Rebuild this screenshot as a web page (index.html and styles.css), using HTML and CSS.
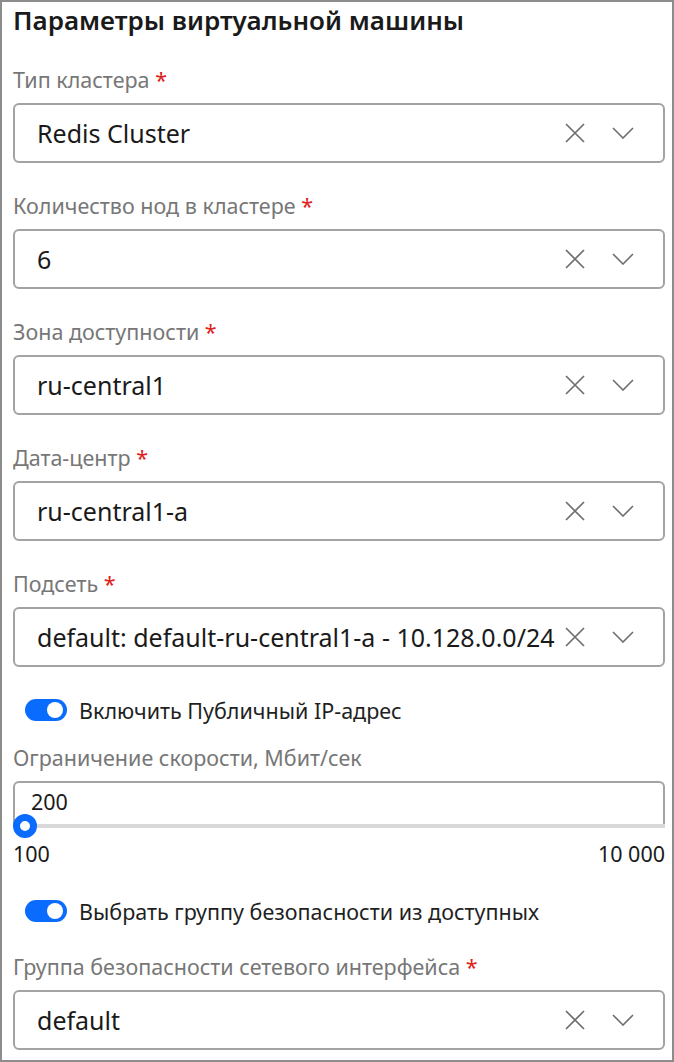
FILE: index.html
```html
<!DOCTYPE html>
<html>
    <head>
        <meta charset="UTF-8" />
        <title>Параметры виртуальной машины</title>
        <link rel="stylesheet" href="styles.css">
    </head>
    <body>
        <div class="panel">
            <h1 class="title">Параметры виртуальной машины</h1>

            <div class="field">
                <div class="label">Тип кластера <span class="req">*</span></div>
                <div class="select">
                    <span class="value">Redis Cluster</span>
                    <svg class="icon-clear" viewBox="0 0 20 20"><path d="M1 1 L19 19 M19 1 L1 19" /></svg>
                    <svg class="icon-arrow" viewBox="0 0 22 12"><path d="M1 1 L11 11 L21 1" /></svg>
                </div>
            </div>

            <div class="field">
                <div class="label">Количество нод в кластере <span class="req">*</span></div>
                <div class="select">
                    <span class="value">6</span>
                    <svg class="icon-clear" viewBox="0 0 20 20"><path d="M1 1 L19 19 M19 1 L1 19" /></svg>
                    <svg class="icon-arrow" viewBox="0 0 22 12"><path d="M1 1 L11 11 L21 1" /></svg>
                </div>
            </div>

            <div class="field">
                <div class="label">Зона доступности <span class="req">*</span></div>
                <div class="select">
                    <span class="value">ru-central1</span>
                    <svg class="icon-clear" viewBox="0 0 20 20"><path d="M1 1 L19 19 M19 1 L1 19" /></svg>
                    <svg class="icon-arrow" viewBox="0 0 22 12"><path d="M1 1 L11 11 L21 1" /></svg>
                </div>
            </div>

            <div class="field">
                <div class="label">Дата-центр <span class="req">*</span></div>
                <div class="select">
                    <span class="value">ru-central1-a</span>
                    <svg class="icon-clear" viewBox="0 0 20 20"><path d="M1 1 L19 19 M19 1 L1 19" /></svg>
                    <svg class="icon-arrow" viewBox="0 0 22 12"><path d="M1 1 L11 11 L21 1" /></svg>
                </div>
            </div>

            <div class="field">
                <div class="label">Подсеть <span class="req">*</span></div>
                <div class="select">
                    <span class="value">default: default-ru-central1-a - 10.128.0.0/24</span>
                    <svg class="icon-clear" viewBox="0 0 20 20"><path d="M1 1 L19 19 M19 1 L1 19" /></svg>
                    <svg class="icon-arrow" viewBox="0 0 22 12"><path d="M1 1 L11 11 L21 1" /></svg>
                </div>
            </div>

            <!-- Public IP -->
            <div class="switch-row">
                <span class="switch"><span class="knob"></span></span>
                <span class="switch-text">Включить Публичный IP-адрес</span>
            </div>

            <div class="field field-slider">
                <div class="label">Ограничение скорости, Мбит/сек</div>
                <div class="slider-input">
                    <span class="value">200</span>
                    <div class="track"><span class="thumb"></span></div>
                </div>
                <div class="range">
                    <span>100</span>
                    <span>10 000</span>
                </div>
            </div>

            <!-- Security group -->
            <div class="switch-row">
                <span class="switch"><span class="knob"></span></span>
                <span class="switch-text">Выбрать группу безопасности из доступных</span>
            </div>

            <div class="field">
                <div class="label">Группа безопасности сетевого интерфейса <span class="req">*</span></div>
                <div class="select">
                    <span class="value">default</span>
                    <svg class="icon-clear" viewBox="0 0 20 20"><path d="M1 1 L19 19 M19 1 L1 19" /></svg>
                    <svg class="icon-arrow" viewBox="0 0 22 12"><path d="M1 1 L11 11 L21 1" /></svg>
                </div>
            </div>
        </div>
    </body>
</html>
```

FILE: styles.css
```css
body {
    margin: 0;
    font-family: "Noto Sans", Arial, sans-serif;
    background-color: #fff;
    color: #1f1f1f;
}

.panel {
    width: 674px;
    height: 1062px;
    box-sizing: border-box;
    border: 2px solid #8c8c8c;
    padding: 2px 7px 0 11px;
}

.title {
    margin: 0;
    font-size: 26px;
    font-weight: 600;
    line-height: 32px;
    color: #1a1a1a;
}

.field {
    margin-top: 30px;
}

.field + .field {
    margin-top: 29px;
}

.label {
    font-size: 21.5px;
    line-height: 28px;
    color: #777;
    margin-bottom: 9px;
}

.req {
    color: #e0201b;
}

.select {
    display: flex;
    align-items: center;
    height: 60px;
    box-sizing: border-box;
    border: 2px solid #a3a3a3;
    border-radius: 6px;
    padding: 0 29px 0 22px;
}

.value {
    flex: 1;
    font-size: 25px;
    color: #1a1a1a;
    white-space: nowrap;
}

.icon-clear {
    width: 20px;
    height: 20px;
    margin-left: 4px;
    fill: none;
    stroke: #6e6e6e;
    stroke-width: 1.7;
}

.icon-arrow {
    width: 22px;
    height: 12px;
    margin-left: 27px;
    fill: none;
    stroke: #6e6e6e;
    stroke-width: 1.6;
}

.switch-row {
    display: flex;
    align-items: center;
    margin-top: 31px;
    padding-left: 12px;
    height: 24px;
}

.switch {
    position: relative;
    width: 42px;
    height: 22px;
    border-radius: 11px;
    background-color: #0a6cff;
}

.knob {
    position: absolute;
    top: 3px;
    right: 4px;
    width: 16px;
    height: 16px;
    border-radius: 50%;
    background-color: #fff;
}

.switch-text {
    margin-left: 12px;
    font-size: 21.5px;
    color: #1f1f1f;
}

.field-slider {
    margin-top: 22px;
}

.slider-input {
    position: relative;
    height: 45px;
    box-sizing: border-box;
    border: 2px solid #a3a3a3;
    border-bottom: none;
    border-radius: 6px 6px 0 0;
    padding: 4px 0 0 16px;
}

.slider-input .value {
    font-size: 21.5px;
}

.track {
    position: absolute;
    left: -2px;
    right: -2px;
    bottom: -2px;
    height: 4px;
    background-color: #d9d9d9;
}

.thumb {
    position: absolute;
    left: 0;
    top: -10px;
    width: 10px;
    height: 10px;
    border: 7px solid #0a6cff;
    border-radius: 50%;
    background-color: #fff;
}

.range {
    display: flex;
    justify-content: space-between;
    margin-top: 14px;
    font-size: 21.5px;
    line-height: 28px;
    color: #1a1a1a;
}
```
